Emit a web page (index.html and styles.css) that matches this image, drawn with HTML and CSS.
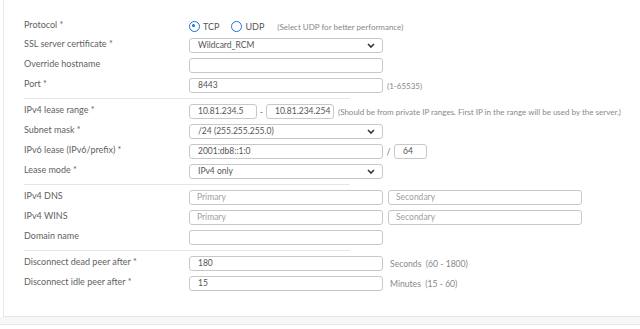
FILE: index.html
```html
<!DOCTYPE html>
<html lang="en">
<head>
  <meta charset="UTF-8">
  <title>SSL VPN settings</title>
  <link rel="stylesheet" href="styles.css">
</head>
<body>
  <div class="card">
    <div class="row row-radio">
      <label class="label">Protocol *</label>
      <div class="ctrl">
        <span class="radio checked"></span><span class="radio-text">TCP</span>
        <span class="radio"></span><span class="radio-text">UDP</span>
        <span class="hint hint-proto">(Select UDP for better performance)</span>
      </div>
    </div>
    <div class="row">
      <label class="label">SSL server certificate *</label>
      <div class="ctrl">
        <div class="field select">Wildcard_RCM<svg class="chev" width="8" height="5" viewBox="0 0 8 5"><polyline points="1,1 4,4 7,1" fill="none" stroke="#333" stroke-width="1.6"/></svg></div>
      </div>
    </div>
    <div class="row">
      <label class="label">Override hostname</label>
      <div class="ctrl"><div class="field"></div></div>
    </div>
    <div class="row">
      <label class="label">Port *</label>
      <div class="ctrl"><div class="field">8443</div><span class="hint">(1-65535)</span></div>
    </div>

    <div class="sep"></div>

    <div class="row">
      <label class="label">IPv4 lease range *</label>
      <div class="ctrl">
        <div class="field ip">10.81.234.5</div>
        <span class="dash">-</span>
        <div class="field ip">10.81.234.254</div>
        <span class="hint">(Should be from private IP ranges. First IP in the range will be used by the server.)</span>
      </div>
    </div>
    <div class="row">
      <label class="label">Subnet mask *</label>
      <div class="ctrl">
        <div class="field select">/24 (255.255.255.0)<svg class="chev" width="8" height="5" viewBox="0 0 8 5"><polyline points="1,1 4,4 7,1" fill="none" stroke="#333" stroke-width="1.6"/></svg></div>
      </div>
    </div>
    <div class="row">
      <label class="label">IPv6 lease (IPv6/prefix) *</label>
      <div class="ctrl">
        <div class="field">2001:db8::1:0</div>
        <span class="slash">/</span>
        <div class="field prefix">64</div>
      </div>
    </div>
    <div class="row">
      <label class="label">Lease mode *</label>
      <div class="ctrl">
        <div class="field select">IPv4 only<svg class="chev" width="8" height="5" viewBox="0 0 8 5"><polyline points="1,1 4,4 7,1" fill="none" stroke="#333" stroke-width="1.6"/></svg></div>
      </div>
    </div>

    <div class="sep"></div>

    <div class="row">
      <label class="label">IPv4 DNS</label>
      <div class="ctrl">
        <div class="field placeholder">Primary</div>
        <div class="field placeholder second">Secondary</div>
      </div>
    </div>
    <div class="row">
      <label class="label">IPv4 WINS</label>
      <div class="ctrl">
        <div class="field placeholder">Primary</div>
        <div class="field placeholder second">Secondary</div>
      </div>
    </div>
    <div class="row">
      <label class="label">Domain name</label>
      <div class="ctrl"><div class="field"></div></div>
    </div>

    <div class="sep"></div>

    <div class="row">
      <label class="label">Disconnect dead peer after *</label>
      <div class="ctrl"><div class="field">180</div><span class="hint unit">Seconds &nbsp;(60 - 1800)</span></div>
    </div>
    <div class="row">
      <label class="label">Disconnect idle peer after *</label>
      <div class="ctrl"><div class="field">15</div><span class="hint unit">Minutes &nbsp;(15 - 60)</span></div>
    </div>
  </div>
  <div class="footer"></div>
</body>
</html>
```

FILE: styles.css
```css
body {
  margin: 0;
  padding: 0;
  background: #fff;
  font-family: Lato, "Liberation Sans", sans-serif;
  overflow: hidden;
}
.card {
  margin-left: 3px;
  border-left: 1px solid #e8e8e8;
  border-bottom: 1px solid #e4e4e4;
  padding: 19px 0 20px 20px;
}
.row {
  display: flex;
  align-items: flex-start;
  height: 15px;
  margin-bottom: 5px;
}
.row-radio {
  height: 14px;
  margin-bottom: 5px;
}
.label {
  width: 165px;
  flex: none;
  font-size: 9px;
  color: #5f5f5f;
  line-height: 12px;
}
.ctrl {
  display: flex;
  align-items: center;
  height: 15px;
}
.field {
  box-sizing: border-box;
  width: 194px;
  height: 15px;
  border: 1px solid #c8c8c8;
  border-radius: 3px;
  padding: 0 8px;
  font-size: 8.5px;
  line-height: 13px;
  color: #555;
  background: #fff;
  flex: none;
}
.select {
  display: flex;
  justify-content: space-between;
  align-items: center;
}
.chev {
  margin-right: -1px;
}
.placeholder {
  color: #a0a0a0;
  padding-left: 7px;
}
.second {
  margin-left: 5px;
}
.ip {
  width: 68px;
}
.dash {
  width: 9px;
  text-align: center;
  font-size: 9px;
  color: #777;
}
.slash {
  width: 11px;
  text-align: center;
  font-size: 9px;
  color: #777;
}
.prefix {
  width: 33px;
}
.hint {
  margin-left: 4px;
  font-size: 8px;
  color: #888;
  white-space: nowrap;
}
.unit {
  margin-left: 7px;
  font-size: 8.6px;
}
.radio {
  box-sizing: border-box;
  width: 11px;
  height: 11px;
  border: 1.8px solid #1e6fd9;
  border-radius: 50%;
  flex: none;
  position: relative;
}
.radio.checked::after {
  content: "";
  position: absolute;
  left: 1.9px;
  top: 1.9px;
  width: 3.6px;
  height: 3.6px;
  border-radius: 50%;
  background: #1e6fd9;
}
.radio-text {
  font-size: 9px;
  color: #555;
  margin: 0 12px 0 3px;
}
.hint-proto {
  margin-left: 1px;
}
.sep {
  width: 326px;
  height: 1px;
  background: #e6e6e6;
  margin: 4px 0 5px;
}
.footer {
  height: 7px;
  background: #f7f7f7;
  border-bottom: 1px solid #e8e8e8;
}
```
